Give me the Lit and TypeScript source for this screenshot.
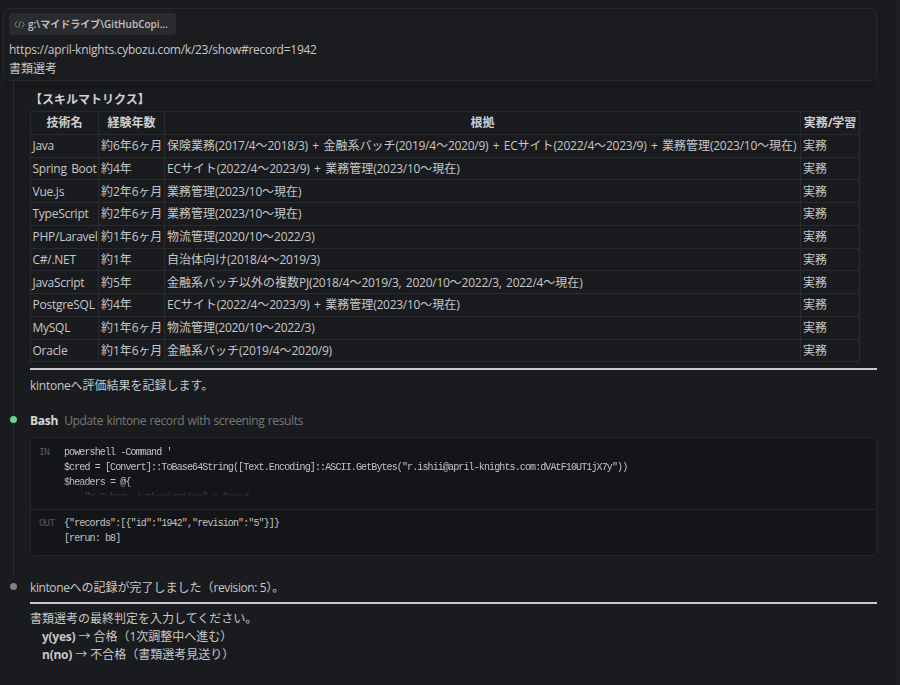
import { LitElement, html, css } from "lit";
import { customElement } from "lit/decorators.js";

const rows: [string, string, string][] = [
  ["Java", "約6年6ヶ月", "保険業務(2017/4〜2018/3) + 金融系バッチ(2019/4〜2020/9) + ECサイト(2022/4〜2023/9) + 業務管理(2023/10〜現在)"],
  ["Spring Boot", "約4年", "ECサイト(2022/4〜2023/9) + 業務管理(2023/10〜現在)"],
  ["Vue.js", "約2年6ヶ月", "業務管理(2023/10〜現在)"],
  ["TypeScript", "約2年6ヶ月", "業務管理(2023/10〜現在)"],
  ["PHP/Laravel", "約1年6ヶ月", "物流管理(2020/10〜2022/3)"],
  ["C#/.NET", "約1年", "自治体向け(2018/4〜2019/3)"],
  ["JavaScript", "約5年", "金融系バッチ以外の複数PJ(2018/4〜2019/3, 2020/10〜2022/3, 2022/4〜現在)"],
  ["PostgreSQL", "約4年", "ECサイト(2022/4〜2023/9) + 業務管理(2023/10〜現在)"],
  ["MySQL", "約1年6ヶ月", "物流管理(2020/10〜2022/3)"],
  ["Oracle", "約1年6ヶ月", "金融系バッチ(2019/4〜2020/9)"],
];

/** Narrows Latin runs only, so that the CJK glyphs keep their full width. */
const t = (s: string) =>
  s.split(/([\x20-\x7e]+)/).map((part, i) => (i % 2 ? html`<span class="l">${part}</span>` : part));

@customElement("app-root")
export class AppRoot extends LitElement {
  static styles = css`
    :host {
      display: block;
      position: relative;
      width: 900px;
      height: 685px;
      overflow: hidden;
      background: #1a1b1e;
      color: #c6c7c8;
      font: 12px/19px "Open Sans", "Noto Sans CJK JP", sans-serif;
    }
    .l { letter-spacing: -0.26px; word-spacing: 1.6px; }
    .page { padding: 8px 23px 0 3px; display: flex; flex-direction: column; }
    .prompt {
      height: 73px;
      box-sizing: border-box;
      border: 1px solid #28292d;
      border-radius: 6px;
      padding: 4px 5px;
      background: #1b1c1f;
    }
    .chip {
      display: inline-flex;
      align-items: center;
      gap: 3px;
      height: 22px;
      width: 167px;
      box-sizing: border-box;
      padding: 0 5px;
      border-radius: 4px;
      background: #2a2b2e;
      font-size: 10px;
      font-weight: 600;
      color: #c0c1c3;
      white-space: nowrap;
      overflow: hidden;
    }
    .chip svg { flex: none; }
    .prompt-text { margin-top: 5px; }
    .fade { height: 8px; background: #17181a; }
    .thread { position: relative; padding: 0 0 0 27px; }
    .line {
      position: absolute;
      left: 10px;
      top: -8px;
      height: 495px;
      width: 1px;
      background: #2c2d31;
    }
    .dot {
      position: absolute;
      left: 7px;
      width: 7px;
      height: 7px;
      border-radius: 50%;
    }
    .green { top: 327px; background: #6fcf8f; }
    .grey { top: 494px; background: #808184; }
    h4 {
      margin: 0;
      height: 22px;
      line-height: 21px;
      font-size: 12px;
      font-weight: 700;
      color: #d0d1d2;
    }
    table {
      border-collapse: collapse;
      table-layout: fixed;
      width: 829px;
      font-size: 12px;
    }
    th, td {
      border: 1px solid #2a2b2f;
      height: 22.75px;
      padding: 1px 2px 0 2px;
      box-sizing: border-box;
      white-space: nowrap;
      overflow: hidden;
      line-height: 20px;
    }
    td:first-child { padding-left: 1.5px; }
    th { font-weight: 700; text-align: center; color: #cecfd0; }
    .rule { height: 2px; background: #c8c9ca; margin-top: 6px; }
    .p { margin: 6px 0 0; height: 19px; }
    .tool { display: flex; gap: 6px; margin-top: 15px; height: 20px; align-items: center; }
    .tool b { color: #d8d8d9; }
    .tool .sub { color: #77787b; }
    .tool .sub .l { letter-spacing: -0.36px; word-spacing: 0.6px; }
    .code {
      margin-top: 7px;
      width: 847px;
      box-sizing: border-box;
      border: 1px solid #26272b;
      border-radius: 5px;
      background: #141518;
      font: 10px/15px "Liberation Mono", monospace;
      letter-spacing: -0.88px;
      color: #c2c3c5;
    }
    .sec { display: flex; padding: 0 8px; }
    .in { height: 72px; padding-top: 7px; box-sizing: border-box; border-bottom: 1px solid #26272b; overflow: hidden; }
    .out { height: 45px; padding-top: 6px; box-sizing: border-box; }
    .lab { width: 25px; color: #55565a; flex: none; }
    pre { margin: 0; font: inherit; }
    .in pre {
      height: 52px;
      overflow: hidden;
      -webkit-mask-image: linear-gradient(#000 70%, transparent 100%);
      mask-image: linear-gradient(#000 70%, transparent 100%);
    }
    .done { margin-top: 22px; height: 19px; }
    .done .l { letter-spacing: -0.4px; word-spacing: 0; }
    .rule2 { height: 2px; background: #c8c9ca; margin-top: 5px; }
    .final { margin-top: 6px; line-height: 18px; }
    .final div { height: 18px; }
    .ind { padding-left: 12px; }
    .final b { font-weight: 700; }
    .scroll { position: absolute; top: 0; right: 0; width: 3px; height: 685px; background: #1e1f22; }
  `;

  render() {
    return html`
      <div class="scroll"></div>
      <div class="page">
        <div class="prompt">
          <div class="chip">
            <svg width="11" height="9" viewBox="0 0 11 9" fill="none" stroke="#808184" stroke-width="1"><path d="M3 1.5 0.8 4.5 3 7.5M8 1.5l2.2 3L8 7.5M6.3 1 4.7 8"/></svg>
            <span>g:\\マイドライブ\\GitHubCopi...</span>
          </div>
          <div class="prompt-text">${t("https://april-knights.cybozu.com/k/23/show#record=1942")}<br />書類選考</div>
        </div>
        <div class="fade"></div>
        <div class="thread">
          <div class="line"></div>
          <div class="dot green"></div>
          <div class="dot grey"></div>
          <h4>【スキルマトリクス】</h4>
          <table>
            <colgroup><col style="width:68px" /><col style="width:66px" /><col style="width:636px" /><col style="width:59px" /></colgroup>
            <thead><tr><th>技術名</th><th>経験年数</th><th>根拠</th><th>${t("実務/学習")}</th></tr></thead>
            <tbody>
              ${rows.map((r) => html`<tr><td>${t(r[0])}</td><td>${t(r[1])}</td><td>${t(r[2])}</td><td>実務</td></tr>`)}
            </tbody>
          </table>
          <div class="rule"></div>
          <div class="p">${t("kintoneへ評価結果を記録します。")}</div>
          <div class="tool"><b>${t("Bash")}</b><span class="sub">${t("Update kintone record with screening results")}</span></div>
          <div class="code">
            <div class="sec in">
              <div class="lab">IN</div>
              <pre>powershell -Command '
$cred = [Convert]::ToBase64String([Text.Encoding]::ASCII.GetBytes("r.ishii@april-knights.com:dVAtF10UT1jX7y"))
$headers = @{
    "X-Cybozu-Authorization" = $cred</pre>
            </div>
            <div class="sec out">
              <div class="lab">OUT</div>
              <pre>{"records":[{"id":"1942","revision":"5"}]}
[rerun: b8]</pre>
            </div>
          </div>
          <div class="done">${t("kintoneへの記録が完了しました（revision: 5）。")}</div>
          <div class="rule2"></div>
          <div class="final">
            <div>書類選考の最終判定を入力してください。</div>
            <div class="ind"><b>${t("y(yes)")}</b> → ${t("合格（1次調整中へ進む）")}</div>
            <div class="ind"><b>${t("n(no)")}</b> → 不合格（書類選考見送り）</div>
          </div>
        </div>
      </div>
    `;
  }
}
